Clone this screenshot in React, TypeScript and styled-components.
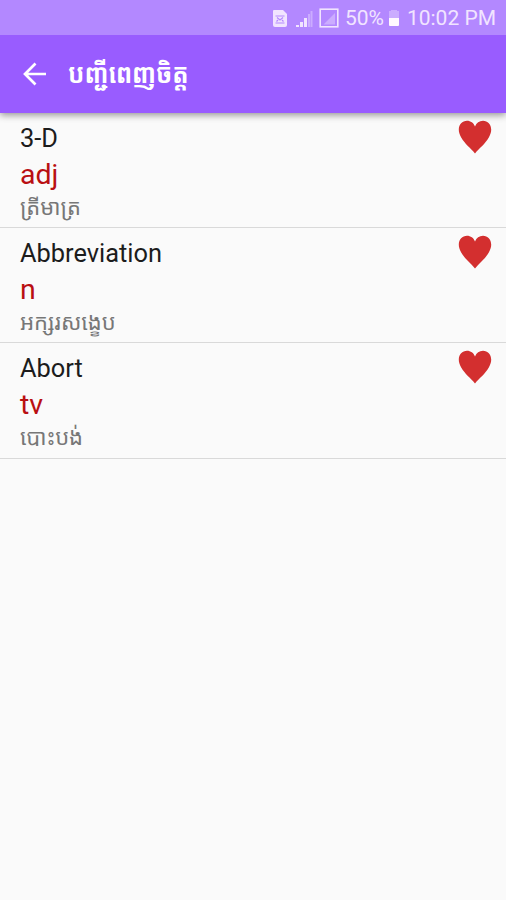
import React from "react";
import styled, { createGlobalStyle } from "styled-components";

const GlobalStyle = createGlobalStyle`
  * { box-sizing: border-box; }
  body { margin: 0; background: #fafafa; font-family: Roboto, "Noto Sans Khmer", "Noto Sans", "DejaVu Sans", sans-serif; }
`;

const Screen = styled.main`
  display: flex;
  flex-direction: column;
  width: 506px;
  height: 900px;
  overflow: hidden;
  background: #fafafa;
`;

const StatusBar = styled.div`
  display: flex;
  align-items: center;
  justify-content: flex-end;
  flex: none;
  height: 35px;
  padding-right: 10px;
  background: #b388ff;
  color: #f1e4ff;
`;

const StatusIcons = styled.svg`
  display: block;
  margin-right: 5px;
`;

const StatusText = styled.span`
  font-size: 21px;
  line-height: 34px;
  white-space: nowrap;
`;

const Battery = styled.svg`
  display: block;
  margin: 0 7px 0 4px;
`;

const AppBar = styled.header`
  display: flex;
  align-items: center;
  flex: none;
  height: 78px;
  padding-left: 23px;
  background: #995cff;
  color: #fff;
  box-shadow: 0 2px 7px rgba(0, 0, 0, 0.42);
  clip-path: inset(0 0 -16px 0);
  z-index: 1;
`;

const Title = styled.h1`
  margin: 0 0 0 21px;
  font-size: 24px;
  font-weight: 700;
  line-height: 36px;
  white-space: nowrap;
  transform: scaleY(1.12);
`;

const List = styled.ul`
  margin: 0;
  padding: 0;
  list-style: none;
`;

const Row = styled.li`
  display: flex;
  justify-content: space-between;
  height: 115.2px;
  padding: 6.5px 14px 0 20px;
  border-bottom: 1px solid #d9d9d9;
`;

const Entry = styled.div`
  display: flex;
  flex-direction: column;
`;

const Word = styled.span`
  height: 36px;
  font-size: 25.4px;
  line-height: 36px;
  color: #1c1c1c;
`;

const PartOfSpeech = styled.span`
  height: 36px;
  font-size: 28.5px;
  line-height: 37px;
  color: #b90f12;
`;

const Meaning = styled.span`
  height: 32px;
  font-size: 22px;
  line-height: 31px;
  color: #777;
  white-space: nowrap;
`;

const HeartIcon = styled.svg`
  display: block;
  flex: none;
`;

const entries = [
  { word: "3-D", part: "adj", meaning: "ត្រីមាត្រ" },
  { word: "Abbreviation", part: "n", meaning: "អក្សរសង្ខេប" },
  { word: "Abort", part: "tv", meaning: "បោះបង់" },
];

function Heart() {
  return (
    <HeartIcon width="34" height="34" viewBox="0 0 34 34">
      <path
        d="M17 33.5C13 28.5 6.5 23.5 3.2 17.5C1.5 14.5 .8 12 .8 9.5C.8 4.5 4.3 .8 9 .8C12.7 .8 15.6 3 17 6.5C18.4 3 21.3 .8 25 .8C29.7 .8 33.2 4.5 33.2 9.5C33.2 12 32.5 14.5 30.8 17.5C27.5 23.5 21 28.5 17 33.5Z"
        fill="#d32f2f"
      />
    </HeartIcon>
  );
}

export default function App() {
  return (
    <Screen>
      <GlobalStyle />
      <StatusBar>
        <StatusIcons width="68" height="22" viewBox="0 0 68 22">
          <path d="M2 3H11L15 7V18Q15 20 13 20H3Q1 20 1 18V4Q1 3 2 3Z" fill="currentColor" />
          <path d="M3.5 9H12.5M3.5 16H12.5M5 10.5L8 13L11 10.5M4.5 14.5L6 13M11.5 14.5L10 13" fill="none" stroke="#b388ff" strokeWidth="1.2" />
          <path d="M24 18H27V20H24ZM28 15H31V20H28ZM32 11H35V20H32Z" fill="currentColor" />
          <path d="M36 7H38V20H36ZM38.5 4H40.5V20H38.5Z" fill="currentColor" opacity="0.4" />
          <rect x="48.2" y="2.2" width="17.6" height="17.6" fill="none" stroke="currentColor" strokeWidth="1.6" />
          <path d="M51.5 17.5L63 6V17.5Z" fill="currentColor" opacity="0.4" />
        </StatusIcons>
        <StatusText>50%</StatusText>
        <Battery width="12" height="18" viewBox="0 0 12 18">
          <path d="M3 1H9V2H11V9H1V2H3Z" fill="currentColor" opacity="0.4" />
          <path d="M1 9H11V16Q11 17 10 17H2Q1 17 1 16Z" fill="#fff8ff" />
        </Battery>
        <StatusText>10:02 PM</StatusText>
      </StatusBar>
      <AppBar>
        <svg width="24" height="24" viewBox="0 0 24 24" fill="none" stroke="currentColor" strokeWidth="2.7">
          <path d="M23 12H2M12.5 1.5L2 12L12.5 22.5" />
        </svg>
        <Title>បញ្ជីពេញចិត្ត</Title>
      </AppBar>
      <List>
        {entries.map((entry) => (
          <Row key={entry.word}>
            <Entry>
              <Word>{entry.word}</Word>
              <PartOfSpeech>{entry.part}</PartOfSpeech>
              <Meaning>{entry.meaning}</Meaning>
            </Entry>
            <Heart />
          </Row>
        ))}
      </List>
    </Screen>
  );
}
